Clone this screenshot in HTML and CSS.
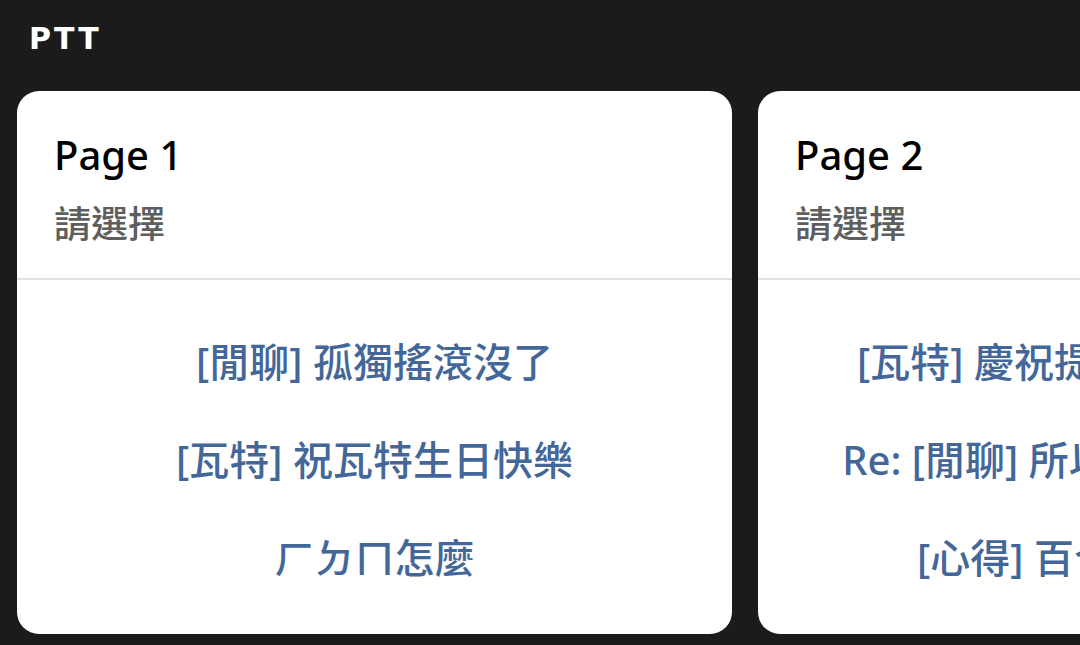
FILE: index.html
```html
<!DOCTYPE html>
<html lang="zh-Hant">
<head>
<meta charset="utf-8">
<title>PTT</title>
<link rel="stylesheet" href="styles.css">
</head>
<body>
<header class="topbar"><span class="brand">PTT</span></header>
<main class="carousel">
  <section class="card">
    <div class="card-head">
      <h2 class="card-title">Page 1</h2>
      <p class="card-sub">請選擇</p>
    </div>
    <ul class="card-list">
      <li class="item">[閒聊] 孤獨搖滾沒了</li>
      <li class="item">[瓦特] 祝瓦特生日快樂</li>
      <li class="item">ㄏㄉㄇ怎麼</li>
    </ul>
  </section>
  <section class="card">
    <div class="card-head">
      <h2 class="card-title">Page 2</h2>
      <p class="card-sub">請選擇</p>
    </div>
    <ul class="card-list">
      <li class="item">[瓦特] 慶祝提前過新年快樂啦</li>
      <li class="item">Re: [閒聊] 所以今天到底看什麼</li>
      <li class="item">[心得] 百合漫畫推薦文</li>
    </ul>
  </section>
</main>
</body>
</html>
```

FILE: styles.css
```css
html, body {
  margin: 0;
  padding: 0;
  background: #1b1b1b;
  width: 1080px;
  height: 645px;
  overflow: hidden;
  font-family: "Noto Sans", "Noto Sans CJK TC", sans-serif;
}
.topbar {
  height: 76px;
  display: flex;
  align-items: center;
  padding-left: 29px;
}
.brand {
  font-family: "DejaVu Sans", sans-serif;
  font-weight: bold;
  font-size: 30px;
  letter-spacing: 3px;
  color: #ffffff;
}
.carousel {
  display: flex;
  gap: 26px;
  padding-left: 17px;
  margin-top: 15px;
  overflow: hidden;
}
.card {
  flex: 0 0 715px;
  height: 543px;
  background: #ffffff;
  border-radius: 22px;
  display: flex;
  flex-direction: column;
  overflow: hidden;
}
.card-head {
  padding: 40px 37px 0;
  height: 189px;
  box-sizing: border-box;
  border-bottom: 2px solid #e3e3e3;
}
.card-title {
  margin: 0;
  font-size: 40px;
  line-height: 48px;
  font-weight: 500;
  color: #000000;
}
.card-sub {
  margin: 23px 0 0;
  font-size: 37px;
  line-height: 44px;
  font-weight: 500;
  color: #5e5e5e;
}
.card-list {
  list-style: none;
  margin: 0;
  padding: 33px 0 0;
}
.item {
  height: 98px;
  line-height: 98px;
  text-align: center;
  font-size: 40px;
  font-weight: 500;
  color: #44679a;
  white-space: nowrap;
}
```
